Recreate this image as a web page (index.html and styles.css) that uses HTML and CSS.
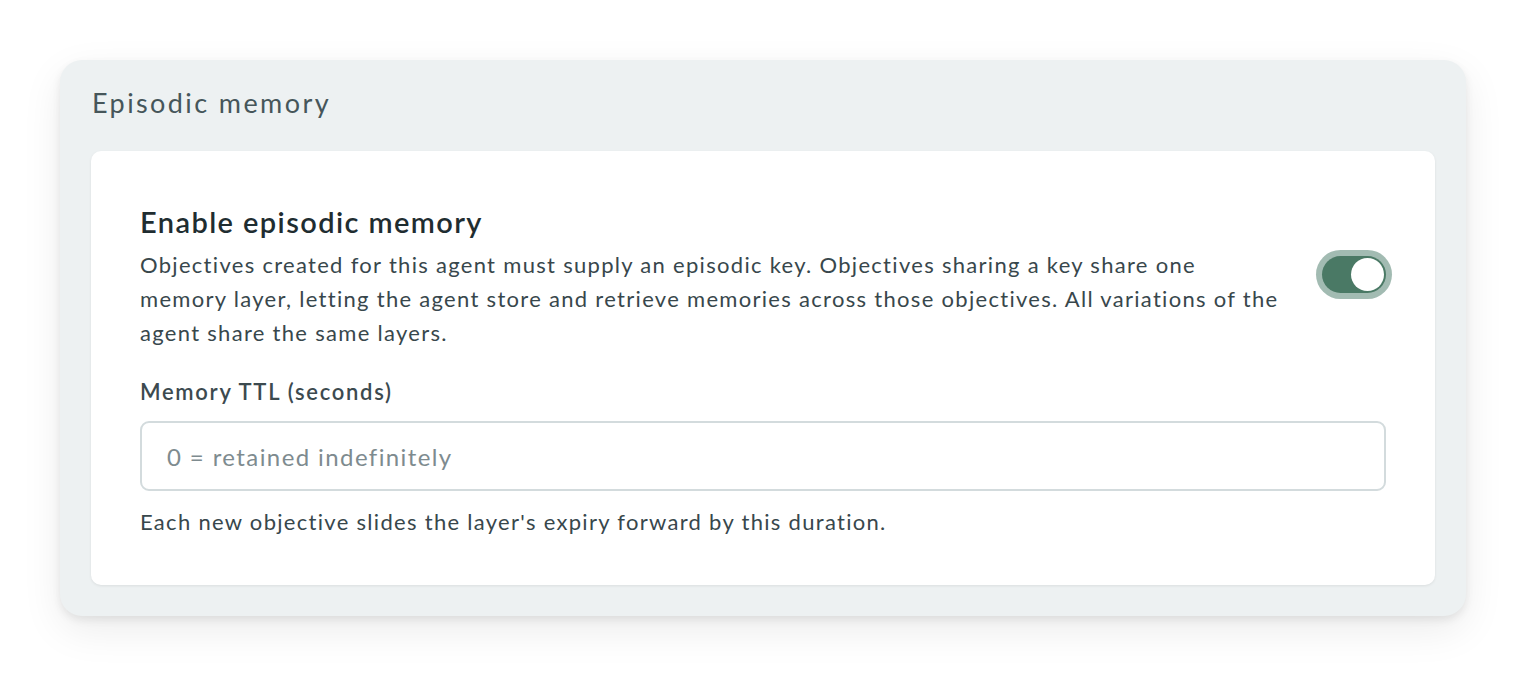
FILE: index.html
```html
<!DOCTYPE html>
<html lang="en">
  <head>
    <meta charset="UTF-8" />
    <meta name="viewport" content="width=device-width, initial-scale=1.0" />
    <title>Episodic memory</title>
    <link rel="stylesheet" href="styles.css">
  </head>
  <body>
    <div class="panel">
      <h2 class="panel-title">Episodic memory</h2>

      <div class="card">
        <div class="setting">
          <div class="setting-text">
            <h3>Enable episodic memory</h3>
            <p>
              Objectives created for this agent must supply an episodic key.
              Objectives sharing a key share one memory layer, letting the agent
              store and retrieve memories across those objectives. All variations
              of the agent share the same layers.
            </p>
          </div>
          <label class="toggle">
            <input type="checkbox" checked />
            <span class="track"><span class="knob"></span></span>
          </label>
        </div>

        <div class="field">
          <label for="ttl">Memory TTL (seconds)</label>
          <input id="ttl" type="text" placeholder="0 = retained indefinitely" />
          <p class="hint">Each new objective slides the layer's expiry forward by this duration.</p>
        </div>
      </div>
    </div>
  </body>
</html>
```

FILE: styles.css
```css
body {
  font-family: "Lato", "Open Sans", sans-serif;
  margin: 0;
  padding: 60px;
  background-color: #ffffff;
  color: #34434a;
}
.panel {
  background-color: #edf1f2;
  border-radius: 22px;
  padding: 24px 31px 31px;
  box-shadow: 0 4px 8px rgba(0, 0, 0, 0.08), 0 14px 40px rgba(0, 0, 0, 0.08);
}
.panel-title {
  margin: 0 0 30px 1px;
  font-size: 27px;
  font-weight: 400;
  letter-spacing: 2.4px;
  line-height: 37px;
  color: #46565a;
}
.card {
  background-color: white;
  border-radius: 10px;
  padding: 54px 49px 48px;
  box-shadow: 0 1px 3px rgba(0, 0, 0, 0.08);
}
.setting {
  display: flex;
  align-items: center;
  gap: 36px;
}
.setting-text {
  flex: 1;
}
.setting-text h3 {
  margin: 0 0 9px;
  font-size: 29px;
  font-weight: 600;
  letter-spacing: 1.4px;
  line-height: 34px;
  color: #1f2d31;
}
.setting-text p {
  margin: 0;
  font-size: 22px;
  letter-spacing: 1.3px;
  line-height: 34px;
  color: #38474c;
}
.toggle {
  margin-bottom: 6px;
}
.toggle input {
  display: none;
}
.track {
  display: flex;
  align-items: center;
  justify-content: flex-end;
  width: 64px;
  height: 37px;
  padding: 0 2px;
  box-sizing: border-box;
  border-radius: 20px;
  background-color: #4a7965;
  box-shadow: 0 0 0 6px #a2bbb2;
}
.knob {
  width: 33px;
  height: 33px;
  border-radius: 50%;
  background-color: white;
}
.field {
  margin-top: 27px;
}
.field label {
  display: block;
  font-size: 22px;
  font-weight: 600;
  letter-spacing: 1.7px;
  line-height: 30px;
  color: #3c4a4f;
  margin-bottom: 14px;
}
.field input {
  display: block;
  width: 100%;
  box-sizing: border-box;
  height: 70px;
  padding: 0 25px;
  border: 2px solid #d3dbdd;
  border-radius: 9px;
  font-family: inherit;
  font-size: 24px;
  letter-spacing: 1.4px;
  color: #34434a;
  outline: none;
}
.field input::placeholder {
  color: #7e8b8f;
}
.hint {
  margin: 16px 0 0;
  font-size: 22px;
  letter-spacing: 1.3px;
  line-height: 30px;
  color: #38474c;
}
```
